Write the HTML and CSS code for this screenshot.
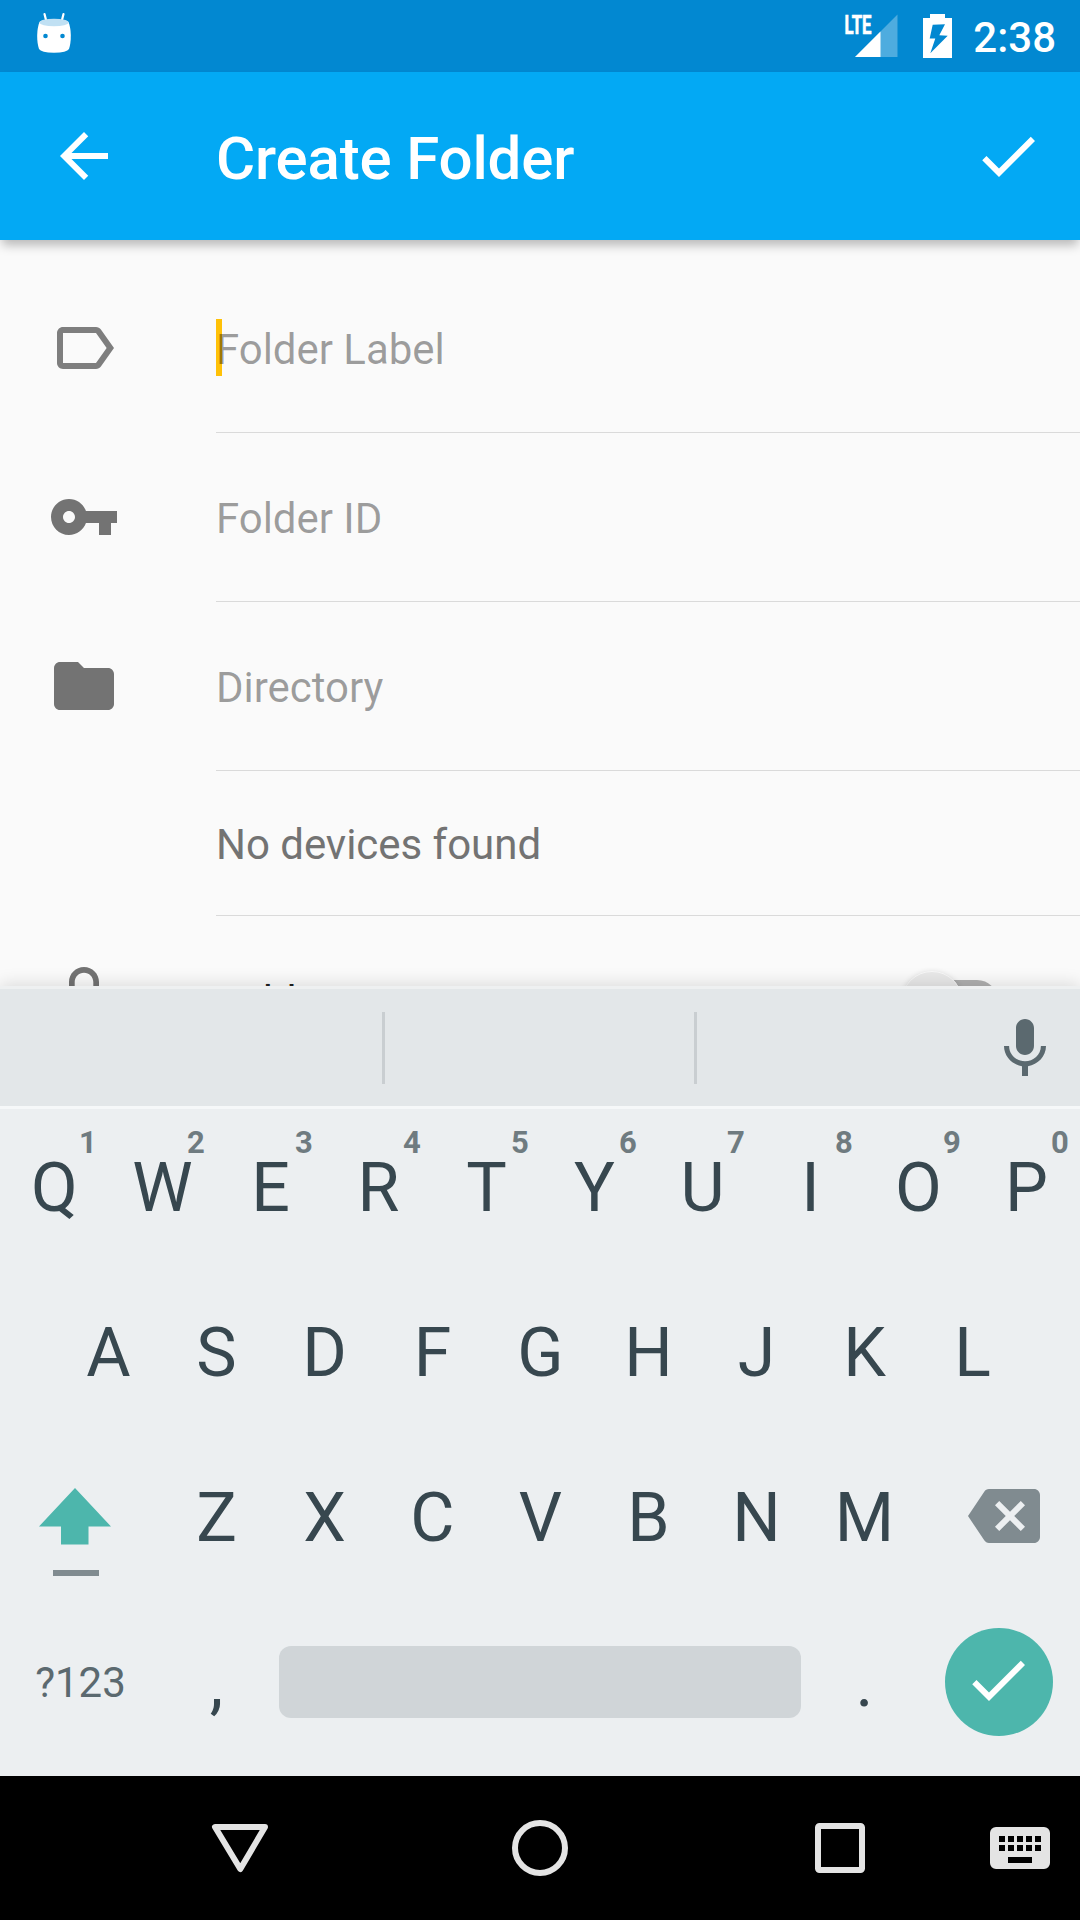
FILE: index.html
```html
<!DOCTYPE html>
<html lang="en">
<head>
<meta charset="utf-8">
<title>Create Folder</title>
<link rel="stylesheet" href="styles.css">
</head>
<body>
<div class="screen">
  <header class="status-bar">
    <svg class="cyan" width="36" height="38" viewBox="0 0 36 38">
      <path d="M8.500 2l2 8M27.500 2l-2 8" stroke="#fff" stroke-width="2.200" stroke-linecap="round"/>
      <path d="M3.500 10C6 6.500 30 6.500 32.500 10C35.500 17 35.500 30 33 37Q31 40.500 18 40.700Q5 40.500 3 37C.5 30 .5 17 3.500 10z" fill="#fff"/>
      <ellipse cx="18" cy="10.500" rx="14.500" ry="3.800" fill="#c0e0f3"/>
      <circle cx="9.500" cy="24" r="2.300" fill="#0288d1"/><circle cx="26.500" cy="24" r="2.300" fill="#0288d1"/>
    </svg>
    <div class="status-icons">
      <svg class="signal" width="54" height="44" viewBox="0 0 54 44">
        <path d="M53.500 0.500V43H11z" fill="#fff" fill-opacity=".3"/>
        <path d="M36.500 17.500V43H11z" fill="#fff"/>
        <text class="lte" x="0.500" y="19.500" textLength="27" lengthAdjust="spacingAndGlyphs">LTE</text>
      </svg>
      <svg class="battery" width="29" height="44" viewBox="0 0 29 44">
        <path fill="#fff" fill-rule="evenodd" d="M7 0h15v4h7v40H0V4h7zM9.700 10.700L22 10.300 16.300 21.300 24.700 21.700 7.300 39.300 12.300 24.500H6.700z"/>
      </svg>
      <span class="clock">2:38</span>
    </div>
  </header>

  <div class="app-bar">
    <svg class="icon" viewBox="0 0 24 24"><path d="M20 11H7.830l5.590-5.590L12 4l-8 8 8 8 1.410-1.410L7.830 13H20v-2z"/></svg>
    <h1 class="title">Create Folder</h1>
    <svg class="icon" viewBox="0 0 24 24"><path d="M9 16.170L4.830 12l-1.420 1.410L9 19 21 7l-1.410-1.410z"/></svg>
  </div>

  <main class="form">
    <div class="row">
      <svg class="icon icon-light" viewBox="0 0 24 24"><path d="M17.630 5.840C17.270 5.330 16.670 5 16 5L5 5.010C3.900 5.010 3 5.900 3 7v10c0 1.100.9 1.990 2 1.990L16 19c.67 0 1.270-.33 1.630-.84L22 12l-4.370-6.160zM16 17H5V7h11l3.550 5L16 17z"/></svg>
      <div class="field hint"><span class="input"><span class="caret"></span>Folder Label</span></div>
    </div>
    <div class="row">
      <svg class="icon" viewBox="0 0 24 24"><path d="M12.650 10C11.830 7.670 9.610 6 7 6c-3.310 0-6 2.690-6 6s2.690 6 6 6c2.610 0 4.830-1.670 5.650-4H17v4h4v-4h2v-4H12.650zM7 14c-1.100 0-2-.9-2-2s.9-2 2-2 2 .9 2 2-.9 2-2 2z"/></svg>
      <div class="field hint"><span>Folder ID</span></div>
    </div>
    <div class="row">
      <svg class="icon" viewBox="0 0 24 24"><path d="M10 4H4c-1.100 0-1.990.9-1.990 2L2 18c0 1.100.9 2 2 2h16c1.100 0 2-.9 2-2V8c0-1.100-.9-2-2-2h-8l-2-2z"/></svg>
      <div class="field hint"><span>Directory</span></div>
    </div>
    <div class="row row-short">
      <div class="field note"><span>No devices found</span></div>
    </div>
    <div class="row">
      <svg class="icon" viewBox="0 0 24 24"><path d="M18 8h-1V6c0-2.760-2.240-5-5-5S7 3.240 7 6v2H6c-1.100 0-2 .9-2 2v10c0 1.100.9 2 2 2h12c1.100 0 2-.9 2-2V10c0-1.100-.9-2-2-2zM8.900 6c0-1.710 1.390-3.100 3.100-3.100s3.100 1.390 3.100 3.100v2H8.900V6zM18 20H6V10h12v10z"/></svg>
      <div class="field setting"><span>Folder Master</span>
        <div class="switch"><div class="knob"></div></div>
      </div>
    </div>
  </main>

  <section class="keyboard">
    <div class="suggestions">
      <div class="slot slot-first"></div><div class="slot slot-mid"></div>
      <svg class="icon mic" viewBox="0 0 24 24"><path d="M12 14c1.660 0 2.990-1.340 2.990-3L15 5c0-1.660-1.340-3-3-3S9 3.340 9 5v6c0 1.660 1.340 3 3 3zm5.300-3c0 3-2.540 5.100-5.300 5.100S6.700 14 6.700 11H5c0 3.410 2.720 6.230 6 6.720V21h2v-3.280c3.280-.48 6-3.300 6-6.720h-1.700z"/></svg>
    </div>
    <div class="keys">
      <div class="key-row">
        <div class="key">Q<sup>1</sup></div><div class="key">W<sup>2</sup></div><div class="key">E<sup>3</sup></div><div class="key">R<sup>4</sup></div><div class="key">T<sup>5</sup></div><div class="key">Y<sup>6</sup></div><div class="key">U<sup>7</sup></div><div class="key">I<sup>8</sup></div><div class="key">O<sup>9</sup></div><div class="key">P<sup>0</sup></div>
      </div>
      <div class="key-row">
        <div class="key">A</div><div class="key">S</div><div class="key">D</div><div class="key">F</div><div class="key">G</div><div class="key">H</div><div class="key">J</div><div class="key">K</div><div class="key">L</div>
      </div>
      <div class="key-row">
        <div class="key key-side key-shift">
          <svg width="72" height="90" viewBox="0 0 72 90"><path d="M36 0L72 38.500H49.500V56.500H22V38.500H0z" fill="#4db6ac"/><path d="M14 82h46v6H14z" fill="#808b90"/></svg>
        </div>
        <div class="key">Z</div><div class="key">X</div><div class="key">C</div><div class="key">V</div><div class="key">B</div><div class="key">N</div><div class="key">M</div>
        <div class="key key-side key-delete">
          <svg class="icon" viewBox="0 0 24 24"><path d="M22 3H7c-.69 0-1.230.35-1.590.88L0 12l5.410 8.110c.36.53.9.89 1.590.89h15c1.100 0 2-.9 2-2V5c0-1.100-.9-2-2-2zm-3 12.590L17.590 17 14 13.410 10.410 17 9 15.590 12.590 12 9 8.410 10.410 7 14 10.590 17.590 7 19 8.410 15.410 12 19 15.590z"/></svg>
        </div>
      </div>
      <div class="key-row key-row-last">
        <div class="key key-side key-symbols">?123</div>
        <div class="key">,</div>
        <div class="space-bar"></div>
        <div class="key">.</div>
        <div class="enter"><svg class="icon" viewBox="0 0 24 24"><path d="M9 16.170L4.830 12l-1.420 1.410L9 19 21 7l-1.410-1.410z"/></svg></div>
      </div>
    </div>
  </section>

  <nav class="nav-bar">
    <svg width="60" height="60" viewBox="0 0 60 60"><path d="M5 9H55L30.300 51z" class="nav-line nav-back"/></svg>
    <svg width="60" height="60" viewBox="0 0 60 60"><circle cx="30" cy="30" r="25" class="nav-line"/></svg>
    <svg width="60" height="60" viewBox="0 0 60 60"><rect x="8" y="8" width="44" height="44" rx="1.500" class="nav-line"/></svg>
    <svg class="ime" width="60" height="42" viewBox="0 0 60 42"><path fill="#e4e4e4" fill-rule="evenodd" d="M6 0H54a6 6 0 0 1 6 6V36a6 6 0 0 1-6 6H6a6 6 0 0 1-6-6V6a6 6 0 0 1 6-6zM9 9v6h6V9zM18 9v6h6V9zM27 9v6h6V9zM36 9v6h6V9zM45 9v6h6V9zM9 18v6h6v-6zM18 18v6h6v-6zM27 18v6h6v-6zM36 18v6h6v-6zM45 18v6h6v-6zM18 30v6h24v-6z"/></svg>
  </nav>
</div>
</body>
</html>
```
FILE: styles.css
```css
* { box-sizing: border-box; }

body {
  margin: 0;
  font-family: Roboto, "Noto Sans", sans-serif;
  background: #fafafa;
}

.screen {
  width: 1080px;
  height: 1920px;
  display: flex;
  flex-direction: column;
  overflow: hidden;
}

svg { display: block; flex: none; overflow: visible; }

.icon { width: 72px; height: 72px; fill: currentColor; }

/* Status bar */
.status-bar {
  height: 72px;
  flex: none;
  display: flex;
  justify-content: space-between;
  align-items: flex-start;
  padding: 0 24px 0 36px;
  background: #0288d1;
  color: #fff;
}
.cyan { margin-top: 12px; }
.status-icons { display: flex; padding-top: 14px; }
.signal { margin-right: 25px; }
.lte { font-size: 26px; font-weight: 700; fill: #fff; stroke: #fff; stroke-width: .7px; }
.battery { margin-right: 21px; }
.clock { font-size: 42px; font-weight: 500; line-height: 48px; }

/* App bar */
.app-bar {
  height: 168px;
  flex: none;
  display: flex;
  align-items: center;
  padding: 0 36px 0 48px;
  background: #03a9f4;
  color: #fff;
  position: relative;
  z-index: 1;
  box-shadow: 0 7px 10px -2px rgba(0, 0, 0, .27);
}
.title {
  flex: 1;
  margin: 5px 0 0 96px;
  font-size: 60px;
  font-weight: 500;
  line-height: 72px;
  letter-spacing: -.15px;
}

/* Form */
.form {
  height: 746px;
  flex: none;
  padding-top: 24px;
  overflow: hidden;
  background: #fafafa;
}
.row {
  height: 169px;
  display: flex;
  justify-content: flex-end;
  align-items: flex-start;
  color: #737373;
}
.row > .icon { margin: 48px auto 0 48px; }
.row > .icon-light { color: #7e7e7e; }
.field {
  width: 864px;
  height: 100%;
  display: flex;
  align-items: center;
  padding-top: 4px;
  border-bottom: 1px solid #dadada;
  font-size: 42px;
  line-height: 50px;
  letter-spacing: -.03px;
}
.row-short { height: 145px; }
.hint { color: rgba(0, 0, 0, .38); }
.note { color: #737373; }
.setting { color: #212121; justify-content: space-between; padding-right: 82px; }
.input { position: relative; z-index: 0; }
.caret {
  position: absolute;
  z-index: -1;
  left: 0;
  top: -6px;
  width: 6px;
  height: 57px;
  background: #ffc107;
}

.switch {
  width: 96px;
  height: 60px;
  margin-top: -3px;
  display: flex;
  align-items: center;
  position: relative;
}
.switch::before {
  content: "";
  width: 78px;
  height: 42px;
  margin-left: 18px;
  border-radius: 21px;
  background: #b0b0b0;
}
.knob {
  position: absolute;
  left: 0;
  top: 0;
  width: 60px;
  height: 60px;
  border-radius: 50%;
  background: #e8e8e8;
  box-shadow: inset 0 1px 0 #f8f8f8, 0 2px 6px rgba(0, 0, 0, .2);
}

/* Keyboard */
.keyboard {
  height: 790px;
  flex: none;
  background: #eceff1;
  position: relative;
  z-index: 1;
  box-shadow: 0 -2px 16px rgba(0, 0, 0, .13);
}
.suggestions {
  height: 123px;
  display: flex;
  align-items: center;
  background: #e3e7e9;
  border-top: 3px solid #eef0f1;
  border-bottom: 3px solid #f6f8f9;
}
.slot { height: 72px; border-right: 3px solid #c9ced1; }
.slot-first { width: 385px; }
.slot-mid { width: 312px; }
.mic { margin: 2px 19px 0 auto; color: #5b696f; }

.key-row { display: flex; justify-content: center; height: 165px; }
.key {
  width: 108px;
  position: relative;
  text-align: center;
  color: #37474f;
  font-size: 68px;
  line-height: 80px;
  padding: 39px 0 0 1px;
}
.key sup {
  position: absolute;
  left: 68px;
  top: 16px;
  width: 40px;
  font-size: 31px;
  font-weight: 700;
  line-height: 36px;
  color: #6f7b80;
}
.key-side { width: 162px; }
.key-shift { padding: 49px 0 0 39px; }
.key-delete { color: #808b90; padding: 41px 0 0 50px; }
.key-row-last { justify-content: flex-start; }
.key-symbols { font-size: 42px; color: #5b696f; padding: 39px 1px 0 0; }
.space-bar {
  width: 522px;
  height: 72px;
  margin: 42px 9px 0;
  border-radius: 12px;
  background: #d0d5d8;
}
.enter {
  width: 108px;
  height: 108px;
  margin: 24px 0 0 27px;
  border-radius: 50%;
  display: flex;
  align-items: center;
  justify-content: center;
  padding: 0 2px 4px 0;
  background: #4db6ac;
  color: #fff;
}

/* Navigation bar */
.nav-bar {
  height: 144px;
  flex: none;
  display: flex;
  align-items: center;
  gap: 240px;
  padding-left: 210px;
  background: #000;
  position: relative;
  z-index: 2;
}
.nav-line { fill: none; stroke: #e4e4e4; stroke-width: 6; }
.nav-back { stroke-linejoin: round; }
.ime { margin-left: -120px; }
```
